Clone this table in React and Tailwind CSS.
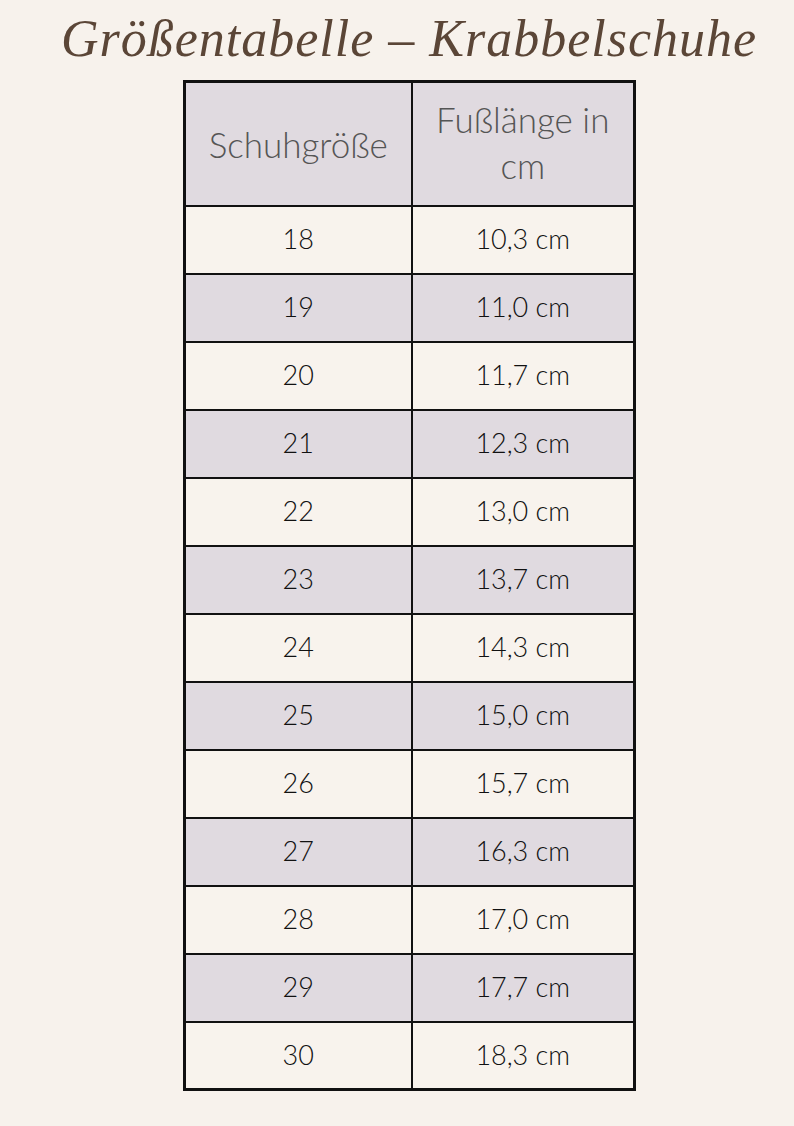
const rows = [
  ['18', '10,3 cm'],
  ['19', '11,0 cm'],
  ['20', '11,7 cm'],
  ['21', '12,3 cm'],
  ['22', '13,0 cm'],
  ['23', '13,7 cm'],
  ['24', '14,3 cm'],
  ['25', '15,0 cm'],
  ['26', '15,7 cm'],
  ['27', '16,3 cm'],
  ['28', '17,0 cm'],
  ['29', '17,7 cm'],
  ['30', '18,3 cm'],
]

export default function App() {
  return (
    <div className="w-[794px] h-[1126px] bg-[#f7f2ec] flex flex-col font-['Lato',sans-serif]">
      <h1 className="mt-[2px] h-[78px] pl-[24px] text-center text-[52px] leading-[74px] italic text-[#5b4637] font-['Liberation_Serif',serif] tracking-[1px]">
        Größentabelle – Krabbelschuhe
      </h1>
      <table className="ml-[183px] w-[453px] border-collapse border-[3px] border-[#111]">
        <thead>
          <tr className="h-[124px] bg-[#e0dae0]">
            <th className="w-[227px] border-2 border-[#111] font-light text-[35px] text-[#555] leading-[46px]">
              Schuhgröße
            </th>
            <th className="border-2 border-[#111] font-light text-[35px] text-[#555] leading-[46px] pb-[4px]">
              Fußlänge in
              <br />
              cm
            </th>
          </tr>
        </thead>
        <tbody>
          {rows.map(([size, len], i) => (
            <tr key={size} className={`h-[68px] ${i % 2 ? 'bg-[#e0dae0]' : 'bg-[#f8f3ed]'}`}>
              <td className="border-2 border-[#111] text-center text-[27px] font-light text-[#111]">{size}</td>
              <td className="border-2 border-[#111] text-center text-[27px] font-light text-[#111]">{len}</td>
            </tr>
          ))}
        </tbody>
      </table>
    </div>
  )
}
